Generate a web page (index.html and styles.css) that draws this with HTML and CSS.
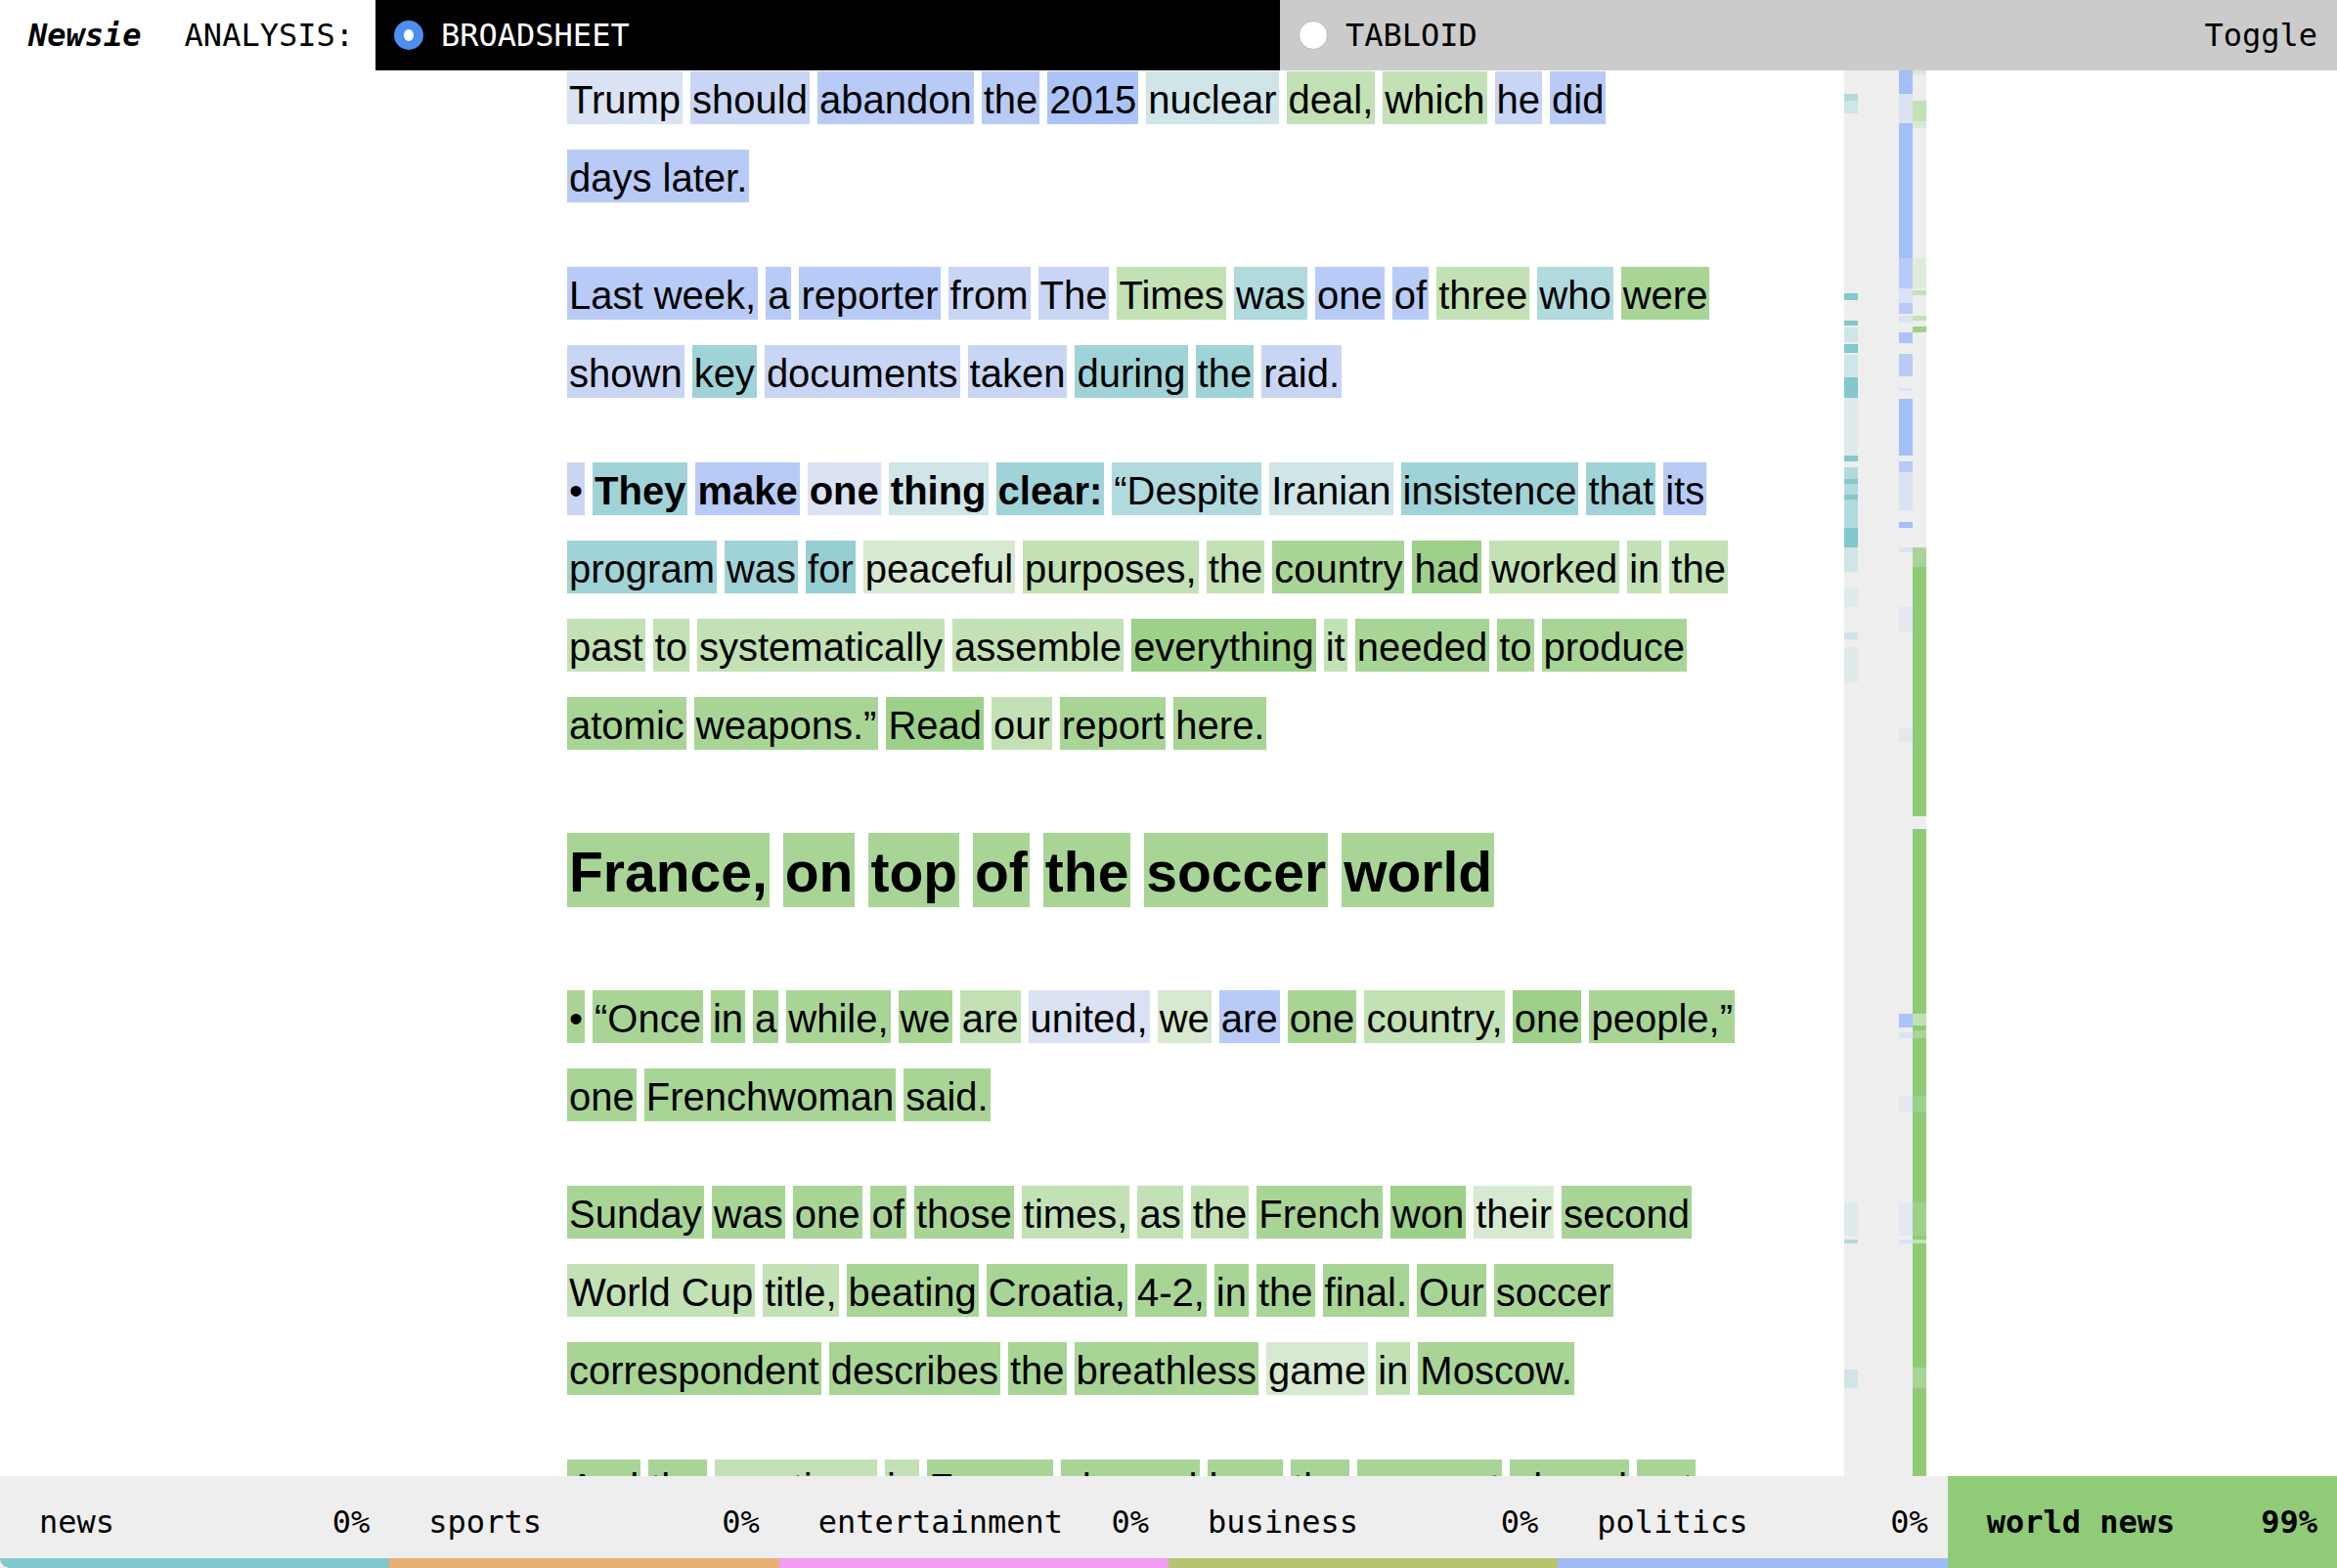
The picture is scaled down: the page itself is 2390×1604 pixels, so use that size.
FILE: index.html
```html
<!DOCTYPE html>
<html lang="en">
<head>
<meta charset="utf-8">
<title>Newsie</title>
<link rel="stylesheet" href="styles.css">
</head>
<body>
<div class="app">
  <header class="topbar">
    <div class="brand">
      <span class="logo">Newsie</span>
      <span class="analysis">ANALYSIS:</span>
    </div>
    <div class="opt opt-on"><span class="radio radio-on"></span><span>BROADSHEET</span></div>
    <div class="opt opt-off"><span class="radio radio-off"></span><span>TABLOID</span><span class="toggle">Toggle</span></div>
  </header>

  <div class="stage">
    <article class="article">
      <p class="para">
        <span class="ln"><span class="w b1">Trump</span><span class="w b2">should</span><span class="w b3">abandon</span><span class="w b3">the</span><span class="w b4">2015</span><span class="w t1">nuclear</span><span class="w g1">deal,</span><span class="w g1">which</span><span class="w b2">he</span><span class="w b3">did</span></span>
        <span class="ln"><span class="w b3">days later.</span></span>
      </p>
      <p class="para">
        <span class="ln"><span class="w b3">Last week,</span><span class="w b3">a</span><span class="w b3">reporter</span><span class="w b2">from</span><span class="w b2">The</span><span class="w g1">Times</span><span class="w t2">was</span><span class="w b3">one</span><span class="w b3">of</span><span class="w g1">three</span><span class="w t2">who</span><span class="w g2">were</span></span>
        <span class="ln"><span class="w b2">shown</span><span class="w t3">key</span><span class="w b2">documents</span><span class="w b2">taken</span><span class="w t3">during</span><span class="w t3">the</span><span class="w b2">raid.</span></span>
      </p>
      <p class="para">
        <span class="ln"><span class="w b2">•</span><span class="w t3 bd">They</span><span class="w b3 bd">make</span><span class="w b1 bd">one</span><span class="w t1 bd">thing</span><span class="w t3 bd">clear:</span><span class="w t2">“Despite</span><span class="w t1">Iranian</span><span class="w t3">insistence</span><span class="w t3">that</span><span class="w b3">its</span></span>
        <span class="ln"><span class="w t3">program</span><span class="w t3">was</span><span class="w t4">for</span><span class="w g0">peaceful</span><span class="w g1">purposes,</span><span class="w g1">the</span><span class="w g2">country</span><span class="w g3">had</span><span class="w g1">worked</span><span class="w g1">in</span><span class="w g1">the</span></span>
        <span class="ln"><span class="w g1">past</span><span class="w g1">to</span><span class="w g1">systematically</span><span class="w g1">assemble</span><span class="w g3">everything</span><span class="w g1">it</span><span class="w g2">needed</span><span class="w g2">to</span><span class="w g2">produce</span></span>
        <span class="ln"><span class="w g2">atomic</span><span class="w g2">weapons.”</span><span class="w g3">Read</span><span class="w g1">our</span><span class="w g2">report</span><span class="w g2">here.</span></span>
      </p>
      <h2 class="hd">
        <span class="ln"><span class="w g2">France,</span><span class="w g2">on</span><span class="w g2">top</span><span class="w g2">of</span><span class="w g2">the</span><span class="w g2">soccer</span><span class="w g2">world</span></span>
      </h2>
      <p class="para">
        <span class="ln"><span class="w g2">•</span><span class="w g2">“Once</span><span class="w g2">in</span><span class="w g2">a</span><span class="w g2">while,</span><span class="w g2">we</span><span class="w g1">are</span><span class="w b1">united,</span><span class="w g0">we</span><span class="w b3">are</span><span class="w g2">one</span><span class="w g1">country,</span><span class="w g3">one</span><span class="w g2">people,”</span></span>
        <span class="ln"><span class="w g2">one</span><span class="w g2">Frenchwoman</span><span class="w g2">said.</span></span>
      </p>
      <p class="para">
        <span class="ln"><span class="w g2">Sunday</span><span class="w g2">was</span><span class="w g2">one</span><span class="w g2">of</span><span class="w g2">those</span><span class="w g1">times,</span><span class="w g1">as</span><span class="w g1">the</span><span class="w g2">French</span><span class="w g3">won</span><span class="w g0">their</span><span class="w g2">second</span></span>
        <span class="ln"><span class="w g1">World Cup</span><span class="w g1">title,</span><span class="w g2">beating</span><span class="w g2">Croatia,</span><span class="w g2">4-2,</span><span class="w g2">in</span><span class="w g2">the</span><span class="w g2">final.</span><span class="w g2">Our</span><span class="w g2">soccer</span></span>
        <span class="ln"><span class="w g2">correspondent</span><span class="w g2">describes</span><span class="w g2">the</span><span class="w g2">breathless</span><span class="w g0">game</span><span class="w g1">in</span><span class="w g2">Moscow.</span></span>
      </p>
      <p class="para">
        <span class="ln"><span class="w g2">And</span><span class="w g2">the</span><span class="w g1">reactions</span><span class="w g1">in</span><span class="w g2">France</span><span class="w g2">showed</span><span class="w g2">how</span><span class="w g2">the</span><span class="w g2">moment</span><span class="w g2">played</span><span class="w g2">out</span></span>
      </p>
    </article>

    <aside class="minimap">
      <div class="mk c-p bs" style="top:0;height:24px"></div>
      <div class="mk c-p b1" style="top:24px;height:30px"></div>
      <div class="mk c-p bs" style="top:54px;height:138px"></div>
      <div class="mk c-p b3" style="top:192px;height:31px"></div>
      <div class="mk c-p b1" style="top:223px;height:15px"></div>
      <div class="mk c-p b3" style="top:238px;height:11px"></div>
      <div class="mk c-p b1" style="top:251px;height:7px"></div>
      <div class="mk c-p b4" style="top:268px;height:11px"></div>
      <div class="mk c-p b3" style="top:290px;height:23px"></div>
      <div class="mk c-p b1" style="top:325px;height:3px"></div>
      <div class="mk c-p bs" style="top:336px;height:58px"></div>
      <div class="mk c-p b3" style="top:400px;height:11px"></div>
      <div class="mk c-p b1" style="top:411px;height:39px"></div>
      <div class="mk c-p bs" style="top:462px;height:6px"></div>
      <div class="mk c-p b1" style="top:488px;height:5px"></div>
      <div class="mk c-p f1" style="top:549px;height:26px"></div>
      <div class="mk c-p f1" style="top:672px;height:15px"></div>
      <div class="mk c-p b4" style="top:965px;height:14px"></div>
      <div class="mk c-p b1" style="top:984px;height:6px"></div>
      <div class="mk c-p f1" style="top:1049px;height:17px"></div>
      <div class="mk c-p f1" style="top:1158px;height:34px"></div>
      <div class="mk c-p b1" style="top:1196px;height:4px"></div>

      <div class="mk c-w g0" style="top:0;height:4px"></div>
      <div class="mk c-w g1" style="top:31px;height:21px"></div>
      <div class="mk c-w g0" style="top:52px;height:7px"></div>
      <div class="mk c-w f2" style="top:192px;height:31px"></div>
      <div class="mk c-w g1" style="top:225px;height:5px"></div>
      <div class="mk c-w g1" style="top:251px;height:5px"></div>
      <div class="mk c-w g3" style="top:262px;height:6px"></div>
      <div class="mk c-w g2" style="top:488px;height:20px"></div>
      <div class="mk c-w gs" style="top:508px;height:255px"></div>
      <div class="mk c-w gs" style="top:776px;height:662px"></div>
      <div class="mk c-w g1" style="top:965px;height:12px"></div>
      <div class="mk c-w g2" style="top:982px;height:8px"></div>
      <div class="mk c-w g3" style="top:1049px;height:17px"></div>
      <div class="mk c-w g3" style="top:1158px;height:34px"></div>
      <div class="mk c-w g1" style="top:1196px;height:4px"></div>
      <div class="mk c-w g2" style="top:1327px;height:21px"></div>

      <div class="mk c-n t2" style="top:24px;height:7px"></div>
      <div class="mk c-n t1" style="top:31px;height:13px"></div>
      <div class="mk c-n ts" style="top:228px;height:7px"></div>
      <div class="mk c-n ts" style="top:256px;height:5px"></div>
      <div class="mk c-n t1" style="top:263px;height:15px"></div>
      <div class="mk c-n ts" style="top:280px;height:9px"></div>
      <div class="mk c-n t1" style="top:291px;height:23px"></div>
      <div class="mk c-n ts" style="top:314px;height:21px"></div>
      <div class="mk c-n f3" style="top:335px;height:59px"></div>
      <div class="mk c-n ts" style="top:394px;height:6px"></div>
      <div class="mk c-n t2" style="top:406px;height:67px"></div>
      <div class="mk c-n ts" style="top:418px;height:5px"></div>
      <div class="mk c-n ts" style="top:434px;height:5px"></div>
      <div class="mk c-n ts" style="top:468px;height:20px"></div>
      <div class="mk c-n t1" style="top:488px;height:25px"></div>
      <div class="mk c-n f3" style="top:529px;height:20px"></div>
      <div class="mk c-n t1" style="top:575px;height:7px"></div>
      <div class="mk c-n f3" style="top:590px;height:36px"></div>
      <div class="mk c-n f3" style="top:1158px;height:34px"></div>
      <div class="mk c-n t2" style="top:1196px;height:4px"></div>
      <div class="mk c-n t1" style="top:1329px;height:19px"></div>
    </aside>
  </div>

  <footer class="footer">
    <div class="cat"><div class="cat-body"><span>news</span><span>0%</span></div><div class="cat-strip s-news"></div></div>
    <div class="cat"><div class="cat-body"><span>sports</span><span>0%</span></div><div class="cat-strip s-sports"></div></div>
    <div class="cat"><div class="cat-body"><span>entertainment</span><span>0%</span></div><div class="cat-strip s-ent"></div></div>
    <div class="cat"><div class="cat-body"><span>business</span><span>0%</span></div><div class="cat-strip s-biz"></div></div>
    <div class="cat"><div class="cat-body"><span>politics</span><span>0%</span></div><div class="cat-strip s-pol"></div></div>
    <div class="cat cat-top"><div class="cat-body"><span>world news</span><span>99%</span></div><div class="cat-strip s-world"></div></div>
  </footer>
</div>
</body>
</html>
```

FILE: styles.css
```css
* {
  box-sizing: border-box;
  margin: 0;
  padding: 0;
}

html,
body {
  width: 100%;
  height: 100%;
}

body {
  font-family: "Liberation Sans", Arial, sans-serif;
  color: #000;
  background: #fff;
  overflow: hidden;
}

.app {
  display: flex;
  flex-direction: column;
  height: 100vh;
}

/* ---------- top bar ---------- */
.topbar {
  flex: none;
  height: 72px;
  display: flex;
  align-items: stretch;
  font-family: "DejaVu Sans Mono", "Liberation Mono", monospace;
  font-size: 32px;
}

.brand {
  width: 384px;
  display: flex;
  align-items: center;
  padding-left: 29px;
  background: #fff;
}

.logo {
  font-weight: bold;
  font-style: italic;
}

.analysis {
  margin-left: 44px;
}

.opt {
  display: flex;
  align-items: center;
  gap: 18px;
  padding-left: 19px;
}

.opt-on {
  width: 925px;
  background: #000;
  color: #fff;
}

.opt-off {
  flex: 1;
  background: #cbcbcb;
  padding-right: 20px;
}

.toggle {
  margin-left: auto;
}

.radio {
  width: 30px;
  height: 30px;
  border-radius: 50%;
  display: flex;
  align-items: center;
  justify-content: center;
  flex: none;
}

.radio-on {
  background: #4c8ff0;
}

.radio-on::after {
  content: "";
  width: 10px;
  height: 12px;
  border-radius: 50%;
  background: #fff;
}

.radio-off {
  background: #fff;
  border: 1px solid #b8b8b8;
}

/* ---------- article ---------- */
.stage {
  flex: 1;
  min-height: 0;
  display: flex;
  overflow: hidden;
}

.article {
  flex: none;
  width: 1306px;
  margin-left: 580px;
  margin-top: -12px;
}

.para {
  margin-bottom: 40px;
}

.hd {
  margin: 70px 0;
}

.ln {
  display: flex;
  align-items: center;
  gap: 8px;
  height: 80px;
  white-space: nowrap;
  font-size: 40px;
  font-weight: normal;
}

.w {
  height: 54px;
  line-height: 58px;
  padding: 0 2px;
  box-shadow: 0 0 1px rgba(0, 0, 0, 0.08);
}

.bd {
  font-weight: bold;
}

.hd .ln {
  gap: 14px;
  font-size: 57px;
  font-weight: bold;
}

.hd .w {
  height: 76px;
  line-height: 80px;
}

/* highlight palette */
.b1 { background: #dae2f4; }
.b2 { background: #c8d5f4; }
.b3 { background: #b8cbf6; }
.b4 { background: #abc3f7; }
.bs { background: #a3bff8; }

.t1 { background: #cfe5e7; }
.t2 { background: #b0dadd; }
.t3 { background: #a0d3d7; }
.t4 { background: #95cfd3; }
.ts { background: #82c8cc; }

.g0 { background: #d8e9d1; }
.g1 { background: #c2e1b5; }
.g2 { background: #a8d596; }
.g3 { background: #9dd088; }
.gs { background: #8fcb77; }

.f1 { background: #e3e7f0; }
.f2 { background: #e1ebdd; }
.f3 { background: #dfeaeb; }

/* ---------- minimap ---------- */
.minimap {
  flex: none;
  position: relative;
  width: 84px;
  background: #eeeeee;
  filter: blur(0.6px);
}

.mk {
  position: absolute;
  width: 14px;
}

.c-n { left: 0; }
.c-p { left: 56px; }
.c-w { left: 70px; }

/* ---------- footer ---------- */
.footer {
  flex: none;
  height: 94px;
  display: grid;
  grid-template-columns: repeat(6, 1fr);
  background: #eeeeee;
  font-family: "DejaVu Sans Mono", "Liberation Mono", monospace;
  font-size: 32px;
}

.cat {
  display: flex;
  flex-direction: column;
}

.cat-body {
  flex: 1;
  display: flex;
  align-items: center;
  justify-content: space-between;
  padding: 10px 20px 0 40px;
}

.cat-strip {
  height: 10px;
}

.s-news { background: #80c8cc; border-bottom-left-radius: 10px; }
.s-sports { background: #e8b072; }
.s-ent { background: #f09cf4; }
.s-biz { background: #b5c46e; }
.s-pol { background: #a0bcf8; }
.s-world { background: #90cc78; }

.cat-top {
  background: #90cc78;
  font-weight: bold;
}
```
